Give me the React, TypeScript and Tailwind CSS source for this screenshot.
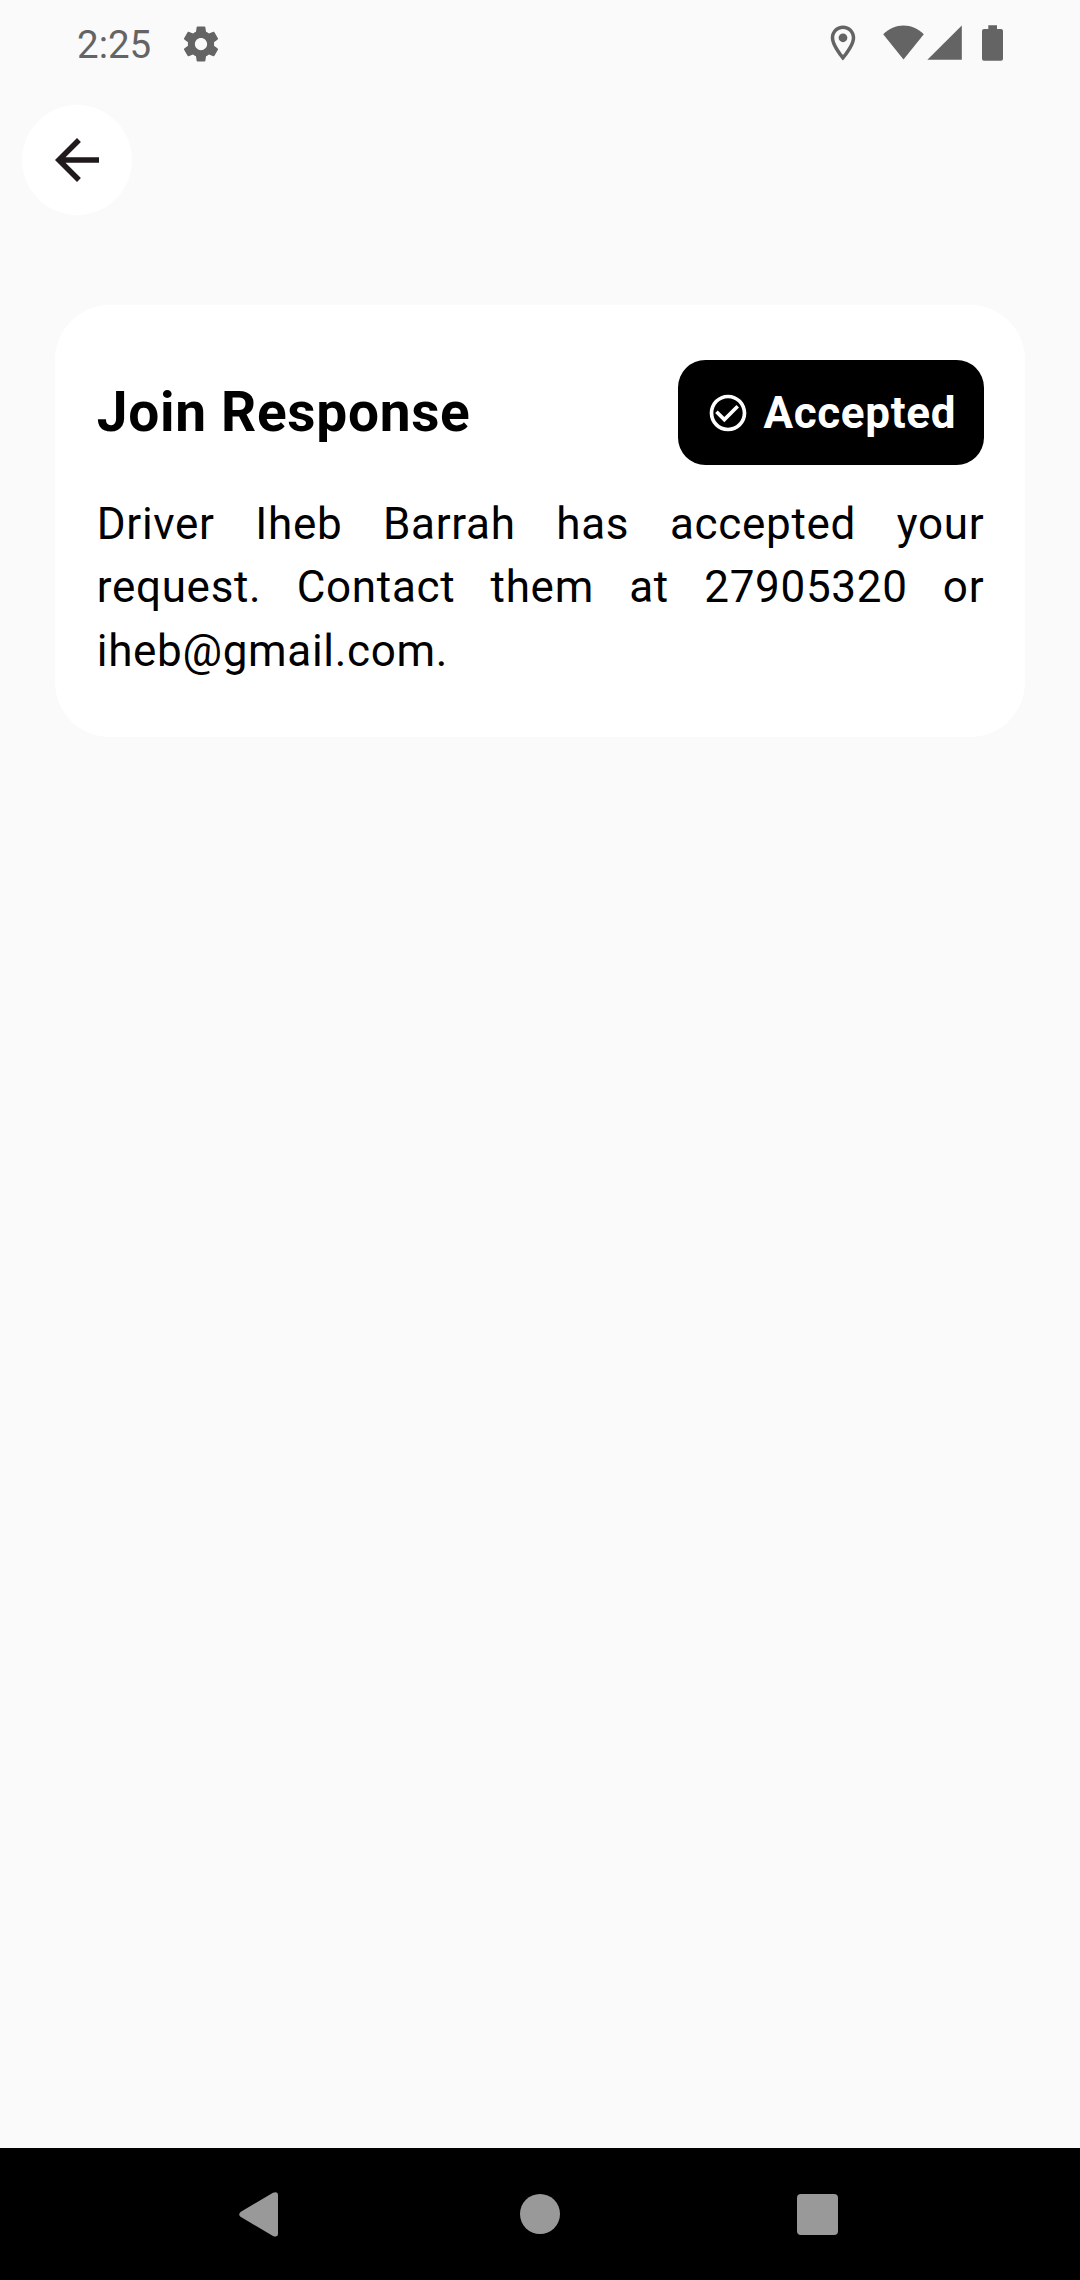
import React from "react";
import { MdOutlineLocationOn, MdArrowBack, MdCheckCircleOutline } from "react-icons/md";

function GearIcon() {
  return (
    <svg className="ml-[28px] mt-[22.5px] size-[42px]" viewBox="0 0 24 24" fill="currentColor">
      <path d="M19.43 12.98c.04-.32.07-.64.07-.98s-.03-.66-.07-.98l2.11-1.65c.19-.15.24-.42.12-.64l-2-3.46c-.12-.22-.39-.3-.61-.22l-2.49 1c-.52-.4-1.08-.73-1.69-.98l-.38-2.65C14.46 2.18 14.25 2 14 2h-4c-.25 0-.46.18-.49.42l-.38 2.65c-.61.25-1.17.59-1.69.98l-2.49-1c-.23-.09-.49 0-.61.22l-2 3.46c-.13.22-.07.49.12.64l2.11 1.65c-.04.32-.07.65-.07.98s.03.66.07.98l-2.11 1.65c-.19.15-.24.42-.12.64l2 3.46c.12.22.39.3.61.22l2.49-1c.52.4 1.08.73 1.69.98l.38 2.65c.03.24.24.42.49.42h4c.25 0 .46-.18.49-.42l.38-2.65c.61-.25 1.17-.59 1.69-.98l2.49 1c.23.09.49 0 .61-.22l2-3.46c.12-.22.07-.49-.12-.64l-2.11-1.65zM12 15.5c-1.93 0-3.5-1.57-3.5-3.5s1.57-3.5 3.5-3.5 3.5 1.57 3.5 3.5-1.57 3.5-3.5 3.5z" />
    </svg>
  );
}

function StatusBar() {
  return (
    <header className="flex h-[83px] items-start justify-between px-[77px] text-[#646464]">
      <div className="flex items-start">
        <span className="mt-[22px] w-[75px] text-[38.5px] leading-[45px]">2:25</span>
        <GearIcon />
      </div>
      <div className="flex items-start">
        <MdOutlineLocationOn className="mt-[21.5px] size-[42px]" />
        <svg className="ml-[19px] mt-[25px] h-[35px] w-[41px]" viewBox="0 0 41 35" fill="currentColor">
          <path d="M20.5 34.6 0.2 9.2C6 3.4 13 0.4 20.5 0.4S35 3.4 40.8 9.2Z" />
        </svg>
        <svg className="ml-[3.5px] mt-[25px] h-[35px] w-[35px]" viewBox="0 0 35 35" fill="currentColor">
          <path d="M0.4 34.7 34.8 0.4V34.7Z" />
        </svg>
        <svg className="ml-[20px] mt-[25px] h-[36px] w-[21px]" viewBox="0 0 21 36" fill="currentColor">
          <path d="M6.3 0.2H15V4H19Q21 4 21 6V33.7Q21 35.7 19 35.7H2Q0 35.7 0 33.7V6Q0 4 2 4H6.3Z" />
        </svg>
      </div>
    </header>
  );
}

function ResponseCard() {
  return (
    <article className="mx-[55px] mt-[68.25px] rounded-[55px] bg-white px-[41.25px] pb-[53.75px] pt-[55px]">
      <div className="flex items-center justify-between">
        <h1 className="pl-[0.5px] text-[55px] font-bold leading-[79px] tracking-[0.69px]">Join Response</h1>
        <div className="flex h-[104.5px] items-center gap-[13.75px] rounded-[27.5px] bg-black px-[27.5px] text-white">
          <MdCheckCircleOutline className="size-[44px]" />
          <span className="pt-[2px] text-[44px] font-bold leading-[63px] tracking-[0.69px]">Accepted</span>
        </div>
      </div>
      <p className="-mr-[0.5px] ml-[0.5px] mt-[28px] text-justify text-[44px] leading-[63.5px] tracking-[0.69px]">
        Driver Iheb Barrah has accepted your request. Contact them at 27905320 or iheb@gmail.com.
      </p>
    </article>
  );
}

function NavigationBar() {
  return (
    <nav className="flex h-[132px] items-start bg-black pl-[239px] text-[#999999]">
      <svg className="mt-[44px] h-[45px] w-[39px]" viewBox="0 0 39 45" fill="currentColor">
        <path d="M1.5 20 34 0.8Q39 -1 39 3.5V41.3Q39 45.8 34 44L1.5 24.8Q-1 22.4 1.5 20Z" />
      </svg>
      <span className="ml-[242px] mt-[46px] size-[40px] rounded-full bg-[#999999]" />
      <span className="ml-[237px] mt-[46px] size-[41.25px] rounded-[4px] bg-[#999999]" />
    </nav>
  );
}

export default function App() {
  return (
    <div className="flex h-[2280px] w-[1080px] flex-col bg-[#fafafa] font-['Roboto',sans-serif] text-black">
      <StatusBar />
      <div className="flex h-[154px] items-center pl-[22px]">
        <button aria-label="Back" className="flex size-[110px] items-center justify-center rounded-full bg-white text-[#201a1b]">
          <MdArrowBack className="size-[66px]" />
        </button>
      </div>
      <main className="grow">
        <ResponseCard />
      </main>
      <NavigationBar />
    </div>
  );
}
